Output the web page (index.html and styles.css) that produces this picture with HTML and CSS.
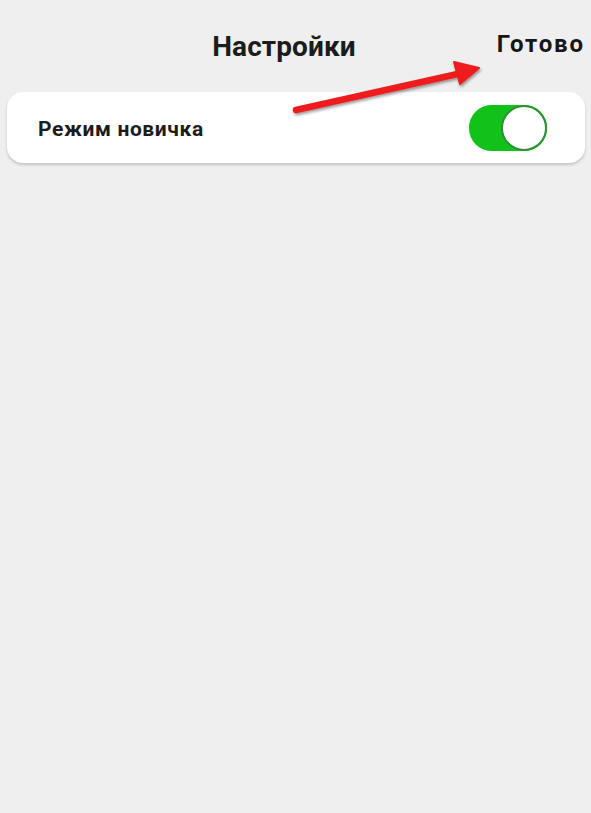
FILE: index.html
```html
<!DOCTYPE html>
<html lang="ru">
<head>
    <meta charset="UTF-8">
    <meta name="viewport" content="width=device-width, initial-scale=1.0">
    <title>Настройки</title>
    <link rel="stylesheet" href="styles.css">
</head>
<body>
    <div class="screen">
        <div class="header">
            <span></span>
            <h2 class="title">Настройки</h2>
            <span class="done">Готово</span>
        </div>

        <div class="card">
            <span class="label">Режим новичка</span>
            <div class="toggle on">
                <div class="knob"></div>
            </div>
        </div>

        <!-- annotation arrow over the screenshot -->
        <svg class="arrow" width="591" height="813" viewBox="0 0 591 813">
            <defs>
                <filter id="shadow" x="-10%" y="-50%" width="120%" height="200%">
                    <feDropShadow dx="1" dy="2" stdDeviation="1.5" flood-color="#000" flood-opacity="0.4"/>
                </filter>
            </defs>
            <g filter="url(#shadow)" fill="#ee1d1d" stroke="#ee1d1d">
                <line x1="296" y1="110" x2="462" y2="73" stroke-width="6.5" stroke-linecap="round"/>
                <polygon points="454,62 479,68 460,84" stroke-width="2" stroke-linejoin="round"/>
            </g>
        </svg>
    </div>
</body>
</html>
```

FILE: styles.css
```css
body {
    margin: 0;
    background-color: #efefef;
    font-family: Roboto, "Noto Sans", Arial, sans-serif;
    color: #1c1c1c;
}
.screen {
    position: relative;
    width: 591px;
    height: 813px;
}
.header {
    display: grid;
    grid-template-columns: 1fr auto 1fr;
    align-items: start;
    padding: 28px 8px 0 0;
}
.title {
    margin: 3px 15px 0 0;
    font-size: 28px;
    line-height: 32px;
    font-weight: 700;
    letter-spacing: 0.1px;
}
.done {
    justify-self: end;
    margin-right: -1.8px;
    font-size: 24px;
    line-height: 32px;
    font-weight: 700;
    letter-spacing: 1.8px;
    color: #161616;
}
.card {
    display: flex;
    align-items: center;
    justify-content: space-between;
    height: 71px;
    margin: 29px 6px 0 7px;
    padding: 0 38px 0 31px;
    background: white;
    border-radius: 16px;
    box-shadow: 0 2px 3px rgba(0, 0, 0, 0.18);
}
.label {
    font-size: 21px;
    font-weight: 700;
    letter-spacing: 0.6px;
    padding-top: 2px;
}
.toggle {
    display: flex;
    justify-content: flex-end;
    width: 78px;
    height: 46px;
    border-radius: 23px;
    background-color: #ccc;
}
.toggle.on {
    background-color: #13c11b;
    box-shadow: 0 0 1px #3be43b;
}
.knob {
    box-sizing: border-box;
    width: 46px;
    height: 46px;
    border-radius: 50%;
    background: white;
    border: 2px solid #2f8f34;
}
.arrow {
    position: absolute;
    top: 0;
    left: 0;
    pointer-events: none;
}
```
